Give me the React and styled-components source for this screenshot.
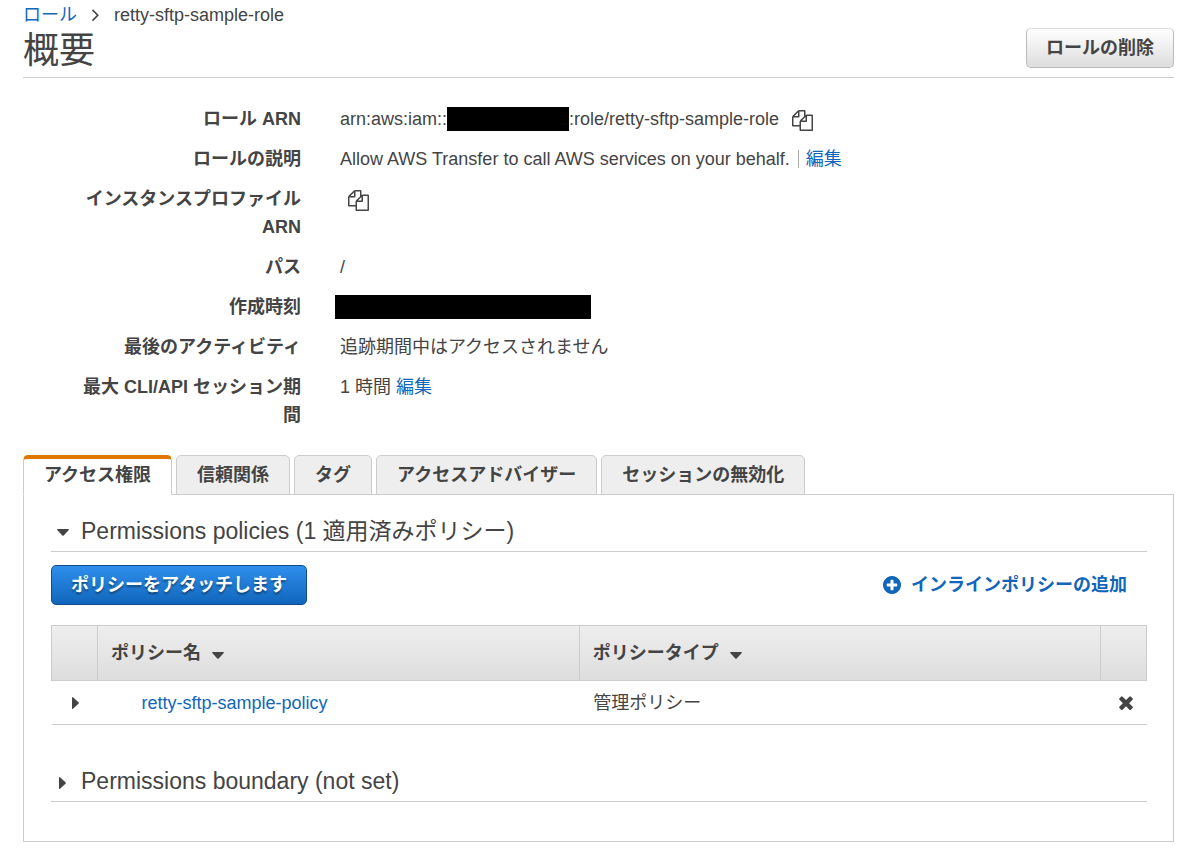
import React, { useState } from "react";
import styled, { createGlobalStyle } from "styled-components";

const tabs = [
  "アクセス権限",
  "信頼関係",
  "タグ",
  "アクセスアドバイザー",
  "セッションの無効化",
];

const policies = [{ name: "retty-sftp-sample-policy", type: "管理ポリシー" }];

const CopyIcon = () => (
  <CopySvg viewBox="0 0 1792 1792" aria-hidden="true">
    <path d="M1696 384q40 0 68 28t28 68v1216q0 40-28 68t-68 28h-960q-40 0-68-28t-28-68v-288h-544q-40 0-68-28t-28-68v-672q0-40 20-88t48-76l408-408q28-28 76-48t88-20h416q40 0 68 28t28 68v328q68-40 128-40h416zm-544 213l-299 299h299v-299zm-640-384l-299 299h299v-299zm196 647l316-316v-416h-384v416q0 40-28 68t-68 28h-416v640h512v-256q0-40 20-88t48-76zm956 804v-1152h-384v416q0 40-28 68t-68 28h-416v640h896z" />
  </CopySvg>
);

const PlusIcon = () => (
  <PlusSvg viewBox="128 128 1536 1536" aria-hidden="true">
    <path d="M1344 960v-128q0-26-19-45t-45-19h-256v-256q0-26-19-45t-45-19h-128q-26 0-45 19t-19 45v256h-256q-26 0-45 19t-19 45v128q0 26 19 45t45 19h256v256q0 26 19 45t45 19h128q26 0 45-19t19-45v-256h256q26 0 45-19t19-45zm320-64q0 209-103 385.5t-279.5 279.5-385.5 103-385.5-103-279.5-279.5-103-385.5 103-385.5 279.5-279.5 385.5-103 385.5 103 279.5 279.5 103 385.5z" />
  </PlusSvg>
);

const RemoveIcon = () => (
  <RemoveSvg viewBox="302 334 1188 1220" aria-hidden="true">
    <path d="M1490 1322q0 40-28 68l-136 136q-28 28-68 28t-68-28l-294-294-294 294q-28 28-68 28t-68-28l-136-136q-28-28-28-68t28-68l294-294-294-294q-28-28-28-68t28-68l136-136q28-28 68-28t68 28l294 294 294-294q28-28 68-28t68 28l136 136q28 28 28 68t-28 68l-294 294 294 294q28 28 28 68z" />
  </RemoveSvg>
);

const Caret = ({ open }) =>
  open ? (
    <CaretSvg $w={12} $h={7} viewBox="0 0 12 7" aria-hidden="true">
      <path d="M0.6 0h10.8q0.9 0.2 0.3 1L6.7 6.5q-0.7 0.6-1.4 0L0.3 1q-0.6-0.8 0.3-1z" />
    </CaretSvg>
  ) : (
    <CaretSvg $w={7} $h={12} viewBox="0 0 7 12" aria-hidden="true">
      <path d="M0 0.6v10.8q0.2 0.9 1 0.3L6.5 6.7q0.6-0.7 0-1.4L1 0.3q-0.8-0.6-1 0.3z" />
    </CaretSvg>
  );

const App = () => {
  const [active, setActive] = useState(tabs[0]);

  return (
    <>
      <GlobalStyle />
      <Page>
        <Breadcrumb aria-label="breadcrumb">
          <Link href="#roles">ロール</Link>
          <ChevronSvg viewBox="599 423 572 1036" aria-hidden="true">
            <path d="M1171 960q0 13-10 23l-466 466q-10 10-23 10t-23-10l-50-50q-10-10-10-23t10-23l393-393-393-393q-10-10-10-23t10-23l50-50q10-10 23-10t23 10l466 466q10 10 10 23z" />
          </ChevronSvg>
          <span>retty-sftp-sample-role</span>
        </Breadcrumb>
        <Header>
          <h1>概要</h1>
          <Button type="button">ロールの削除</Button>
        </Header>

        <Summary>
          <dt>ロール ARN</dt>
          <dd>
            arn:aws:iam::
            <Redacted $width="122px" />
            :role/retty-sftp-sample-role
            <CopyButton type="button" aria-label="コピー">
              <CopyIcon />
            </CopyButton>
          </dd>
          <dt>ロールの説明</dt>
          <dd>
            Allow AWS Transfer to call AWS services on your behalf.
            <Separator />
            <Link href="#description">編集</Link>
          </dd>
          <dt>インスタンスプロファイル ARN</dt>
          <dd>
            <CopyButton type="button" aria-label="コピー" $first>
              <CopyIcon />
            </CopyButton>
          </dd>
          <dt>パス</dt>
          <dd>/</dd>
          <dt>作成時刻</dt>
          <dd>
            <Redacted $width="256px" $outdent />
          </dd>
          <dt>最後のアクティビティ</dt>
          <dd>追跡期間中はアクセスされません</dd>
          <dt>最大 CLI/API セッション期間</dt>
          <dd>
            1 時間&nbsp;<Link href="#session">編集</Link>
          </dd>
        </Summary>

        <TabList role="tablist">
          {tabs.map((tab) => (
            <Tab
              key={tab}
              type="button"
              role="tab"
              aria-selected={tab === active}
              $active={tab === active}
              onClick={() => setActive(tab)}
            >
              {tab}
            </Tab>
          ))}
        </TabList>
        <Panel role="tabpanel">
          <SectionTitle>
            <SectionToggle type="button" aria-expanded="true">
              <CaretSlot>
                <Caret open />
              </CaretSlot>
              Permissions policies (1 適用済みポリシー)
            </SectionToggle>
          </SectionTitle>
          <Actions>
            <PrimaryButton type="button">ポリシーをアタッチします</PrimaryButton>
            <InlineLink href="#inline-policy">
              <PlusIcon />
              インラインポリシーの追加
            </InlineLink>
          </Actions>
          <PolicyTable>
            <colgroup>
              <Col $width="46px" />
              <Col $width="44%" />
              <Col />
              <Col $width="46px" />
            </colgroup>
            <thead>
              <tr>
                <th />
                <th>
                  <SortButton type="button">
                    ポリシー名
                    <Caret open />
                  </SortButton>
                </th>
                <th>
                  <SortButton type="button">
                    ポリシータイプ
                    <Caret open />
                  </SortButton>
                </th>
                <th />
              </tr>
            </thead>
            <tbody>
              {policies.map((policy) => (
                <tr key={policy.name}>
                  <IconCell>
                    <IconButton type="button" aria-label="展開">
                      <Caret />
                    </IconButton>
                  </IconCell>
                  <NameCell>
                    <Link href="#policy">{policy.name}</Link>
                  </NameCell>
                  <td>{policy.type}</td>
                  <IconCell $last>
                    <IconButton type="button" aria-label="デタッチ">
                      <RemoveIcon />
                    </IconButton>
                  </IconCell>
                </tr>
              ))}
            </tbody>
          </PolicyTable>
          <SectionTitle>
            <SectionToggle type="button" aria-expanded="false">
              <CaretSlot>
                <Caret />
              </CaretSlot>
              Permissions boundary (not set)
            </SectionToggle>
          </SectionTitle>
        </Panel>
      </Page>
    </>
  );
};

const GlobalStyle = createGlobalStyle`
  * {
    box-sizing: border-box;
  }
  body {
    margin: 0;
    background: white;
    color: #444;
    font-family: "Liberation Sans", "Noto Sans CJK JP", sans-serif;
    font-size: 18px;
    line-height: 28px;
  }
  button {
    font: inherit;
    color: inherit;
    cursor: pointer;
  }
  svg {
    fill: currentColor;
  }
`;

const Page = styled.main`
  padding: 1px 26px 15px 23px;
`;
const Link = styled.a`
  color: #1166bb;
  text-decoration: none;
  &:hover {
    text-decoration: underline;
  }
`;
const Breadcrumb = styled.nav`
  display: flex;
  align-items: center;
  gap: 15px;
  height: 28px;
`;
const ChevronSvg = styled.svg`
  width: 7px;
  height: 12px;
`;
const Header = styled.header`
  display: flex;
  align-items: center;
  justify-content: space-between;
  height: 49px;
  padding-bottom: 10px;
  border-bottom: 1px solid #ccc;
  h1 {
    margin: 0;
    padding-top: 5px;
    font-size: 36px;
    font-weight: 400;
    line-height: 40px;
  }
`;
const Button = styled.button`
  height: 40px;
  padding: 0 19px;
  border: 1px solid #bbb;
  border-top-color: #ddd;
  border-radius: 5px;
  background: linear-gradient(#fff, #ddd);
  font-weight: 700;
`;
const PrimaryButton = styled(Button)`
  border-color: #0f4c8c;
  background: linear-gradient(#2f8eed, #1166bb);
  color: white;
  text-shadow: 0 2px 2px rgba(0, 0, 0, 0.4);
`;
const Summary = styled.dl`
  display: grid;
  grid-template-columns: 230px 1fr;
  gap: 12px 39px;
  margin: 27px 0 0;
  padding-left: 48px;
  dt {
    font-weight: 700;
    text-align: right;
  }
  dd {
    display: flex;
    align-items: center;
    height: 28px;
    margin: 0;
  }
`;
const Redacted = styled.span`
  width: ${({ $width }) => $width};
  height: 24px;
  margin-left: ${({ $outdent }) => ($outdent ? "-5px" : "0")};
  background: black;
`;
const CopyButton = styled.button`
  display: flex;
  margin-left: ${({ $first }) => ($first ? "8px" : "13px")};
  padding: 2px 0 0;
  border: 0;
  background: none;
`;
const CopySvg = styled.svg`
  width: 21px;
  height: 21px;
`;
const Separator = styled.span`
  width: 1px;
  height: 18px;
  margin: 0 7px 0 8px;
  background: #aaa;
`;
const TabList = styled.div`
  display: flex;
  gap: 4px;
  margin-top: 26px;
`;
const Tab = styled.button`
  height: 40px;
  margin-bottom: -1px;
  padding: 0 20px;
  border: 1px solid #ccc;
  border-radius: 5px 5px 0 0;
  background: #eee;
  font-weight: 700;
  ${({ $active }) =>
    $active &&
    `
    border-top: 4px solid #e07700;
    border-bottom-color: white;
    background: white;
    padding-bottom: 3px;
    position: relative;
  `}
`;
const Panel = styled.section`
  padding: 16px 26px 39px 27px;
  border: 1px solid #ccc;
`;
const SectionTitle = styled.h2`
  margin: 0;
  padding: 2px 0;
  border-bottom: 1px solid #ccc;
  font-size: 23px;
  font-weight: 400;
  line-height: 36px;
`;
const SectionToggle = styled.button`
  display: flex;
  align-items: center;
  padding: 0;
  border: 0;
  background: none;
`;
const CaretSlot = styled.span`
  display: flex;
  justify-content: center;
  width: 23px;
  margin-right: 7px;
  padding-top: 3px;
`;
const CaretSvg = styled.svg`
  flex: none;
  width: ${({ $w }) => $w}px;
  height: ${({ $h }) => $h}px;
`;
const Actions = styled.div`
  display: flex;
  align-items: center;
  justify-content: space-between;
  margin: 13px 0 20px;
`;
const InlineLink = styled(Link)`
  display: flex;
  align-items: center;
  gap: 10px;
  margin-right: 20px;
  font-weight: 700;
`;
const PlusSvg = styled.svg`
  width: 18px;
  height: 18px;
`;
const PolicyTable = styled.table`
  width: 100%;
  margin-bottom: 36px;
  border-collapse: collapse;
  table-layout: fixed;
  thead tr {
    background: linear-gradient(#eee, #ddd);
  }
  th {
    height: 55px;
    padding: 0 13px;
    border: 1px solid #ccc;
    text-align: left;
  }
  td {
    height: 44px;
    padding: 0 14px;
    border-bottom: 1px solid #ccc;
  }
`;
const Col = styled.col`
  width: ${({ $width }) => $width || "auto"};
`;
const SortButton = styled.button`
  display: flex;
  align-items: center;
  gap: 11px;
  padding: 0;
  border: 0;
  background: none;
  svg {
    margin-top: 4px;
  }
`;
const NameCell = styled.td`
  && {
    padding-left: 44px;
  }
`;
const IconCell = styled.td`
  && {
    padding: ${({ $last }) => ($last ? "0 0 0 5px" : "0 4px 0 5px")};
  }
`;
const IconButton = styled.button`
  display: flex;
  align-items: center;
  justify-content: center;
  width: 100%;
  height: 28px;
  padding: 0;
  border: 0;
  background: none;
`;
const RemoveSvg = styled.svg`
  width: 14px;
  height: 14px;
`;

export default App;
